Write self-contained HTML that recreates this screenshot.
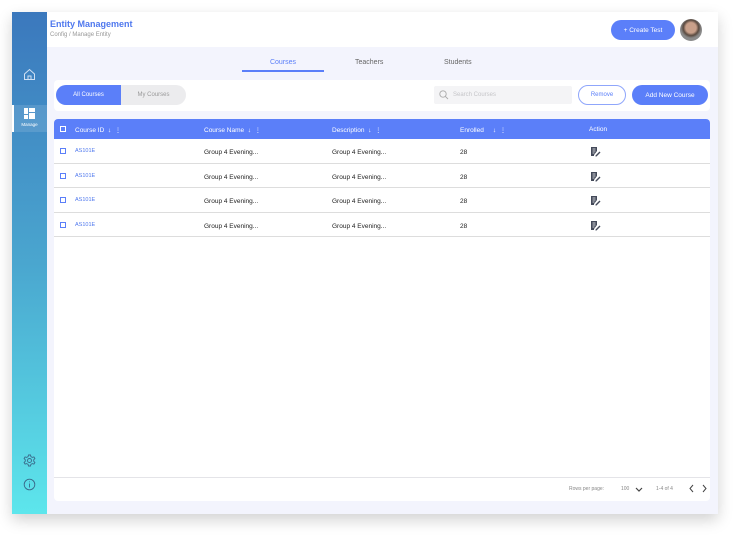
<!DOCTYPE html>
<html><head><style>
*{box-sizing:border-box;margin:0;padding:0}
body{width:738px;height:535px;background:#fff;font-family:"Liberation Sans",sans-serif;position:relative;overflow:hidden}
.frame{position:absolute;left:12px;top:12px;width:706px;height:502px;background:#f3f4fd;box-shadow:0 6px 14px rgba(0,0,0,.18)}
.side{position:absolute;left:0;top:0;width:35px;height:502px;background:linear-gradient(#3b78bd,#4aa6cf 50%,#5de6ec)}
.hdr{position:absolute;left:35px;top:0;width:671px;height:35px;background:#fff}
.abs{position:absolute}
.t{font-size:6.5px;color:#222}
.c{display:flex;align-items:center;justify-content:center}
</style></head><body>
<div class="frame">
<div class="side">
 <svg class="abs" style="left:11px;top:56px" width="13" height="13" viewBox="0 0 13 13" fill="none" stroke="#cfe0f3" stroke-width="1"><path d="M1.5 6 L6.5 1.5 L11.5 6 V11.5 H1.5Z M5 11.5 V8 H8 V11.5"/></svg>
 <div class="abs" style="left:0;top:93px;width:35px;height:27px;background:rgba(255,255,255,.12);border-left:2px solid #fff"></div>
 <svg class="abs" style="left:12px;top:96px" width="11" height="11" viewBox="0 0 11 11" fill="#fff"><rect x="0" y="0" width="4" height="6"/><rect x="5" y="0" width="6" height="4"/><rect x="0" y="7" width="4" height="4"/><rect x="5" y="5" width="6" height="6"/></svg>
 <div class="abs" style="left:0;top:110px;width:35px;text-align:center;font-size:4.5px;color:#fff">Manage</div>
 <svg class="abs" style="left:11px;top:442px" width="13" height="13" viewBox="0 0 13 13" fill="none" stroke="#3a6a8a" stroke-width=".9"><circle cx="6.5" cy="6.5" r="2"/><path d="M5.5 1h2l.4 1.6 1.4.8 1.6-.5 1 1.7-1.2 1.2v1.4l1.2 1.2-1 1.7-1.6-.5-1.4.8L7.5 12h-2l-.4-1.6-1.4-.8-1.6.5-1-1.7 1.2-1.2V5.8L1.1 4.6l1-1.7 1.6.5 1.4-.8z"/></svg>
 <svg class="abs" style="left:11px;top:466px" width="13" height="13" viewBox="0 0 13 13" fill="none" stroke="#3a6a8a" stroke-width=".9"><circle cx="6.5" cy="6.5" r="5.3"/><path d="M6.5 5.5v4M6.5 3.5v.8"/></svg>
</div>
<div class="hdr">
 <div class="abs" style="left:3px;top:7px;font-size:9px;font-weight:bold;color:#4f78ee">Entity Management</div>
 <div class="abs" style="left:3px;top:20px;font-size:6px;color:#999">Config / Manage Entity</div>
 <div class="abs c" style="left:564px;top:8px;width:64px;height:20px;border-radius:10px;background:#5b7ff9;color:#fff;font-size:6.5px">+ Create Test</div>
 <div class="abs" style="left:633px;top:7px;width:22px;height:22px;border-radius:50%;background:radial-gradient(circle at 50% 40%,#c9a08a 0 30%,#5a4a40 45%,#8a8a8a 60%)"></div>
</div>
<div class="abs" style="left:230px;top:47px;width:82px;text-align:center;font-size:7px;color:#5b7ff9">Courses</div>
<div class="abs" style="left:230px;top:58px;width:82px;height:2px;background:#5b7ff9"></div>
<div class="abs" style="left:343px;top:47px;font-size:7px;color:#666">Teachers</div>
<div class="abs" style="left:432px;top:47px;font-size:7px;color:#666">Students</div>
<div class="abs" style="left:42px;top:68px;width:656px;height:31px;background:#fff;border-radius:4px">
 <div class="abs" style="left:2px;top:5px;width:130px;height:20px;border-radius:10px;background:#ececee;overflow:hidden">
  <div class="abs c" style="left:0;top:0;width:65px;height:20px;background:#5b7ff9;color:#fff;font-size:6px">All Courses</div>
  <div class="abs c" style="left:65px;top:0;width:65px;height:20px;color:#999;font-size:6px">My Courses</div>
 </div>
 <div class="abs" style="left:380px;top:6px;width:138px;height:18px;background:#f4f4f6;border-radius:2px">
  <svg class="abs" style="left:5px;top:4px" width="10" height="10" viewBox="0 0 10 10" fill="none" stroke="#aaa" stroke-width=".9"><circle cx="4" cy="4" r="3.2"/><path d="M6.4 6.4L9 9"/></svg>
  <div class="abs" style="left:19px;top:6px;font-size:6px;color:#c5c5c8">Search Courses</div>
 </div>
 <div class="abs c" style="left:524px;top:5px;width:48px;height:20px;border:1px solid #8fa6fb;border-radius:10px;color:#5b7ff9;font-size:6px">Remove</div>
 <div class="abs c" style="left:578px;top:5px;width:76px;height:20px;border-radius:10px;background:#5b7ff9;color:#fff;font-size:6.5px">Add New Course</div>
</div>
<div class="abs" style="left:42px;top:107px;width:656px;height:382px;background:#fff;border-radius:4px;overflow:hidden">
 <div class="abs" style="left:0;top:0;width:656px;height:20px;background:#5b7ff9;color:#fff;font-size:6.5px">
  <div class="abs" style="left:6px;top:7px;width:6px;height:6px;border:1px solid #fff"></div>
  <div class="abs" style="left:21px;top:7px">Course ID &nbsp;↓ &nbsp;⋮</div>
  <div class="abs" style="left:150px;top:7px">Course Name &nbsp;↓ &nbsp;⋮</div>
  <div class="abs" style="left:278px;top:7px">Description &nbsp;↓ &nbsp;⋮</div>
  <div class="abs" style="left:406px;top:7px">Enrolled &nbsp; &nbsp; ↓ &nbsp;⋮</div>
  <div class="abs" style="left:535px;top:7px">Action</div>
 </div>
 <div class="abs" style="left:0;top:20px;width:656px">
  <div style="position:relative;height:24.6px;border-bottom:1px solid #ddd">
   <div class="abs" style="left:6px;top:9px;width:6px;height:6px;border:1px solid #5b7ff9"></div>
   <div class="abs" style="left:21px;top:9px;font-size:5.5px;color:#4f78ee">AS101E</div>
   <div class="abs t" style="left:150px;top:10px">Group 4 Evening...</div>
   <div class="abs t" style="left:278px;top:10px">Group 4 Evening...</div>
   <div class="abs t" style="left:406px;top:10px">28</div>
   <svg class="abs" style="left:536px;top:7px" width="11" height="11" viewBox="0 0 11 11"><path d="M1 1h6v4l-3 4v1H1z" fill="#444a5a"/><path d="M2.5 3h3M2.5 5h3M2.5 7h2" stroke="#fff" stroke-width=".7"/><path d="M5.5 9.5l4-4 1 1-4 4h-1z" fill="#444a5a"/></svg>
  </div>
  <div style="position:relative;height:24.6px;border-bottom:1px solid #ddd">
   <div class="abs" style="left:6px;top:9px;width:6px;height:6px;border:1px solid #5b7ff9"></div>
   <div class="abs" style="left:21px;top:9px;font-size:5.5px;color:#4f78ee">AS101E</div>
   <div class="abs t" style="left:150px;top:10px">Group 4 Evening...</div>
   <div class="abs t" style="left:278px;top:10px">Group 4 Evening...</div>
   <div class="abs t" style="left:406px;top:10px">28</div>
   <svg class="abs" style="left:536px;top:7px" width="11" height="11" viewBox="0 0 11 11"><path d="M1 1h6v4l-3 4v1H1z" fill="#444a5a"/><path d="M2.5 3h3M2.5 5h3M2.5 7h2" stroke="#fff" stroke-width=".7"/><path d="M5.5 9.5l4-4 1 1-4 4h-1z" fill="#444a5a"/></svg>
  </div>
  <div style="position:relative;height:24.6px;border-bottom:1px solid #ddd">
   <div class="abs" style="left:6px;top:9px;width:6px;height:6px;border:1px solid #5b7ff9"></div>
   <div class="abs" style="left:21px;top:9px;font-size:5.5px;color:#4f78ee">AS101E</div>
   <div class="abs t" style="left:150px;top:10px">Group 4 Evening...</div>
   <div class="abs t" style="left:278px;top:10px">Group 4 Evening...</div>
   <div class="abs t" style="left:406px;top:10px">28</div>
   <svg class="abs" style="left:536px;top:7px" width="11" height="11" viewBox="0 0 11 11"><path d="M1 1h6v4l-3 4v1H1z" fill="#444a5a"/><path d="M2.5 3h3M2.5 5h3M2.5 7h2" stroke="#fff" stroke-width=".7"/><path d="M5.5 9.5l4-4 1 1-4 4h-1z" fill="#444a5a"/></svg>
  </div>
  <div style="position:relative;height:24.6px;border-bottom:1px solid #ddd">
   <div class="abs" style="left:6px;top:9px;width:6px;height:6px;border:1px solid #5b7ff9"></div>
   <div class="abs" style="left:21px;top:9px;font-size:5.5px;color:#4f78ee">AS101E</div>
   <div class="abs t" style="left:150px;top:10px">Group 4 Evening...</div>
   <div class="abs t" style="left:278px;top:10px">Group 4 Evening...</div>
   <div class="abs t" style="left:406px;top:10px">28</div>
   <svg class="abs" style="left:536px;top:7px" width="11" height="11" viewBox="0 0 11 11"><path d="M1 1h6v4l-3 4v1H1z" fill="#444a5a"/><path d="M2.5 3h3M2.5 5h3M2.5 7h2" stroke="#fff" stroke-width=".7"/><path d="M5.5 9.5l4-4 1 1-4 4h-1z" fill="#444a5a"/></svg>
  </div>
 </div>
 <div class="abs" style="left:0;top:358px;width:656px;height:1px;background:#e4e4e8"></div>
 <div class="abs" style="left:515px;top:367px;font-size:5px;color:#888">Rows per page:</div>
 <div class="abs" style="left:567px;top:367px;font-size:5px;color:#888">100</div>
 <svg class="abs" style="left:581px;top:368px" width="8" height="6" viewBox="0 0 8 6" fill="none" stroke="#444" stroke-width="1.2"><path d="M1 1l3 3 3-3"/></svg>
 <div class="abs" style="left:602px;top:367px;font-size:5px;color:#888">1-4 of 4</div>
 <svg class="abs" style="left:634px;top:365px" width="20" height="9" viewBox="0 0 20 9" fill="none" stroke="#444" stroke-width="1"><path d="M5 1L2 4.5 5 8M15 1l3 3.5L15 8"/></svg>
</div>
</div>
</body></html>
